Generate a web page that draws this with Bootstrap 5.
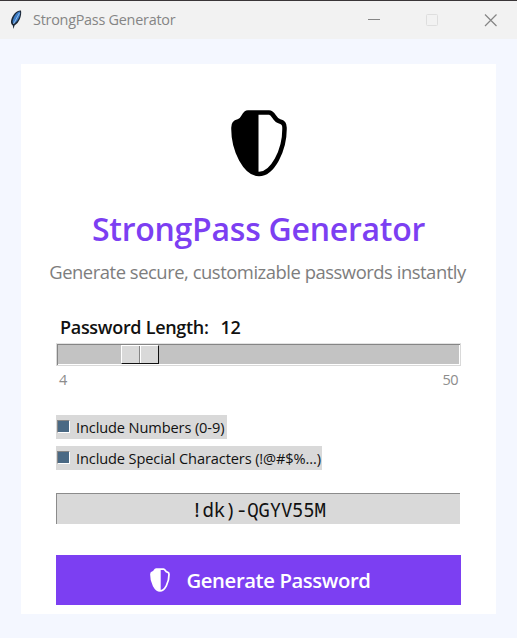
<!DOCTYPE html>
<html lang="en">
<head>
<meta charset="utf-8">
<meta name="viewport" content="width=device-width, initial-scale=1">
<title>StrongPass Generator</title>
<link href="https://cdn.jsdelivr.net/npm/bootstrap@5.3.0/dist/css/bootstrap.min.css" rel="stylesheet">
<style>
body{font-family:"Open Sans","Noto Sans",sans-serif;background:#f4f7ff;height:638px;overflow:hidden;color:#111}
.titlebar{height:39px;background:#f2f2f2;border-top:1px solid #3a3638;padding:0 20px 0 9px}
.caption{font-size:14.4px;line-height:36px;color:#858585;margin-left:10px;letter-spacing:-.25px;white-space:nowrap}
.panel{margin:25px 21px 0;height:550px;background:#fff;padding:45px 35px 0}
.shield{height:68px}
.heading{font-size:32px;font-weight:600;line-height:32px;letter-spacing:-.25px;color:#7c3ff2;margin:36px -35px 0;white-space:nowrap}
.subline{font-size:18.4px;line-height:24px;letter-spacing:-.46px;color:#7d7d7d;margin:15px -34px 0 -36px;white-space:nowrap}
.len-label{font-size:18px;font-weight:600;line-height:22px;letter-spacing:-.3px;margin:32px 0 5px 4px}
.trough{height:23px;width:405px;background:#c3c3c3;border:1px solid #d9d9d9;border-top-color:#e3e3e3;box-shadow:inset 1px 1px 0 #858585,inset -1px -1px 0 #fff;padding:1px 0 0 64px}
.thumb{width:38px;height:19px;background:#d9d9d9;border:1px solid #fff;border-right:1px solid #111;border-bottom:1px solid #111}
.thumb span{width:18px;border-right:1px solid #858585}
.thumb i{width:1px;background:#fff}
.range-ends{font-size:14.5px;letter-spacing:-.5px;line-height:18px;color:#8c8c8c;margin:5px 3px 0 3px}
.check-row{height:24px;background:#d9d9d9;font-size:14.6px;letter-spacing:-.12px;line-height:25px;padding:0 0 0 1px;white-space:nowrap}
.numbers-row{width:171px;margin-top:26px}
.special-row{width:266px;margin-top:7px}
.tick{width:13px;height:13px;background:#4a6984;border:1px solid #858585;border-right-color:#fff;border-bottom-color:#fff;margin:5px 6px 0 0}
.result{height:31px;width:404px;background:#d9d9d9;border-top:1px solid #8b8b8b;border-left:1px solid #8b8b8b;margin-top:23px;font:19px/32px "Noto Sans Mono","DejaVu Sans Mono",monospace;letter-spacing:-.2px}
.generate{height:50px;width:405px;background:#7c3ff2;margin-top:31px;border-radius:0;padding:0 0 0 2px;color:#fff;font-size:20.3px;letter-spacing:-.4px;font-weight:600}
.generate:hover{background:#7c3ff2;color:#fff}
</style>
<script src="https://cdn.jsdelivr.net/npm/bootstrap@5.3.0/dist/js/bootstrap.bundle.min.js"></script>
</head>
<body>
<header class="titlebar d-flex align-items-center">
  <svg width="14" height="20" viewBox="0 0 14 20"><path d="M12 .5C8 0 3 5 2 11c-.2 2 .5 3.500 1.800 4.500L4.500 19l1-3.500C10 13 13 6 12 .5z" fill="#1d2836"/><path d="M11 1.500C7.500 2 4.500 6 3.500 12l1 2C8.500 11.500 12 6 11 1.500z" fill="#3c7cc6"/><path d="M10.500 3 4.500 14" stroke="#a9cbed" stroke-width=".8"/></svg>
  <span class="caption">StrongPass Generator</span>
  <svg class="ms-auto" width="130" height="14" viewBox="0 0 130 14" fill="none"><path d="M1 6.500h12" stroke="#858585"/><rect x="59.500" y="1.500" width="11" height="11" rx="1" stroke="#dedede"/><path d="m118 1.500 11.500 11.500m0-11.500L118 13" stroke="#858585" stroke-width="1.200"/></svg>
</header>
<main class="panel">
  <svg class="shield d-block mx-auto" width="58" height="68" viewBox="0 0 58 68"><path d="M18 3.500h21c5 0 5 8 11 9 3 .6 4.500 2 4.500 6C55 42 42 65 29 65S3 42 3.500 18.500c0-4 1.500-5.400 4.500-6 6-1 5-9 10-9z" fill="#fff" stroke="#000" stroke-width="4.500"/><path d="M28.500 3.500V65C16 65 3 42 3.500 18.500c0-4 1.500-5.400 4.500-6 6-1 5-9 10-9z"/></svg>
  <h1 class="heading text-center"><span>StrongPass Generator</span></h1>
  <p class="subline text-center mb-0"><span>Generate secure, customizable passwords instantly</span></p>
  <div class="len-label d-flex"><span>Password Length:</span><span class="len-value ms-2 ps-1">12</span></div>
  <div class="trough"><div class="thumb d-flex"><span></span><i></i></div></div>
  <div class="range-ends d-flex justify-content-between"><span>4</span><span>50</span></div>
  <div class="check-row numbers-row d-flex"><span class="tick"></span><span>Include Numbers (0-9)</span></div>
  <div class="check-row special-row d-flex"><span class="tick"></span><span>Include Special Characters (!@#$%...)</span></div>
  <div class="result text-center">!dk)-QGYV55M</div>
  <button class="generate btn d-flex align-items-center justify-content-center" type="button">
    <svg class="me-3" width="22" height="24" viewBox="0 0 58 68"><path d="M18 3h21c5 0 5 8 11 9 3 .6 4.500 2 4.500 6C55 42 42 65 29 65S3 42 3.500 18c0-4 1.500-5.400 4.500-6C14 11 13 3 18 3z" fill="none" stroke="#fff" stroke-width="5"/><path d="M31 3v62C16 65 3 42 3.500 18c0-4 1.500-5.400 4.500-6C14 11 13 3 18 3z" fill="#fff"/></svg>
    <span>Generate Password</span>
  </button>
</main>
</body>
</html>
